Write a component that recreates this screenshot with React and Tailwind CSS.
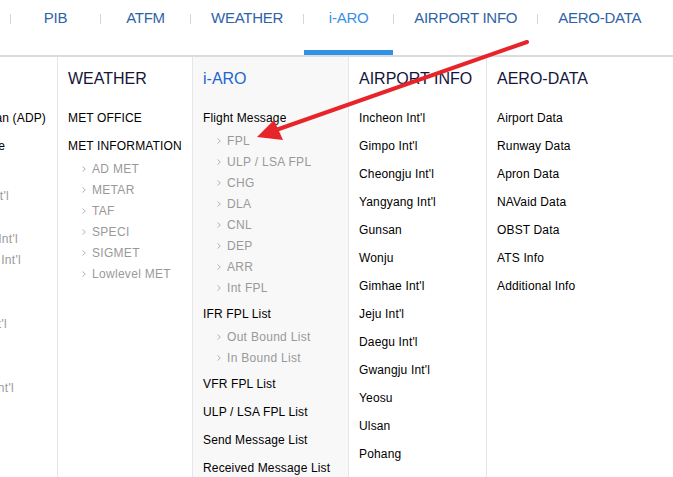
import React from "react";

const Chev = () => (
  <svg width="4" height="6" viewBox="0 0 4 6" className="shrink-0">
    <path d="M0.5 0.5 L3.3 3 L0.5 5.5" fill="none" stroke="#b4b4b4" strokeWidth="1" />
  </svg>
);

const Top = ({ children }) => (
  <div className="h-[28px] flex items-center text-[12px] tracking-[0.15px] text-black whitespace-nowrap">{children}</div>
);

const Subs = ({ items }) => (
  <div className="-mt-[1.5px] mb-[1.5px]">
    {items.map((t) => (
      <div key={t} className="h-[21px] flex items-center pl-[14px] gap-[6px] text-[12px] tracking-[0.3px] text-[#999] whitespace-nowrap">
        <Chev />
        <span>{t}</span>
      </div>
    ))}
  </div>
);

const Heading = ({ children, blue }) => (
  <div className={`h-[24px] mb-[13px] flex items-center text-[16px] whitespace-nowrap ${blue ? "text-[#2266cc]" : "text-[#14143a]"}`}>
    {children}
  </div>
);

const nav = ["PIB", "ATFM", "WEATHER", "i-ARO", "AIRPORT INFO", "AERO-DATA"];

const leftGray = ["", "Gimpo Int'l", "", "Cheongju Int'l", "Yangyang Int'l", "", "", "Jeju Int'l", "", "", "Gwangju Int'l"];
const leftPr = [0, "pr-[48px]", 0, "pr-[39px]", "pr-[36px]", 0, 0, "pr-[50px]", 0, 0, "pr-[43px]"];

export default function App() {
  return (
    <div className="relative w-[673px] h-[477px] overflow-hidden bg-white font-['Liberation_Sans',Arial,sans-serif]">
      {/* top nav */}
      <div className="flex h-[57px] pl-[10px] border-b-2 border-[#dcdcdc]">
        {nav.map((n) => {
          const active = n === "i-ARO";
          return (
            <div key={n} className="flex h-full">
              <div className="w-px h-[10px] mt-[14px] bg-[#d6d6d6]" />
              <div className="flex flex-col h-full min-w-[89px] px-[20px]">
                <div
                  className={`h-[36px] flex items-center justify-center text-[15px] tracking-[-0.25px] whitespace-nowrap ${
                    active ? "text-[#3a8fe6]" : "text-[#2e63a7]"
                  }`}
                >
                  {n}
                </div>
                {active && <div className="mt-auto -mx-[20px] h-[5px] bg-[#3191e7]" />}
              </div>
            </div>
          );
        })}
      </div>

      {/* columns */}
      <div className="flex h-[420px]">
        {/* clipped left column */}
        <div className="w-[58px] shrink-0 border-r border-[#e6e6e6] overflow-hidden pt-[10px]">
          <div className="h-[24px] mb-[13px]" />
          <div className="h-[28px] flex items-center justify-end pr-[11px] text-[12px] tracking-[0.15px] text-black whitespace-nowrap">
            <span className="shrink-0">ATFM Daily Plan (ADP)</span>
          </div>
          <div className="h-[28px] flex items-center justify-end pr-[52px] text-[12px] tracking-[0.15px] text-black whitespace-nowrap">
            <span className="shrink-0">Flow Message Exchange</span>
          </div>
          <div className="mt-[4.3px]">
            {leftGray.map((t, i) => (
              <div
                key={i}
                className={`h-[21.3px] flex items-center justify-end text-[12px] tracking-[0.3px] text-[#999] whitespace-nowrap ${leftPr[i] || ""}`}
              >
                {t && <span className="shrink-0">{t}</span>}
              </div>
            ))}
          </div>
        </div>

        {/* WEATHER */}
        <div className="w-[135px] shrink-0 border-r border-[#e6e6e6] pt-[10px] pl-[10px]">
          <Heading>WEATHER</Heading>
          <Top>MET OFFICE</Top>
          <Top>MET INFORMATION</Top>
          <Subs items={["AD MET", "METAR", "TAF", "SPECI", "SIGMET", "Lowlevel MET"]} />
        </div>

        {/* i-ARO */}
        <div className="w-[156px] shrink-0 border-r border-[#e6e6e6] bg-[#f8f8f8] pt-[10px] pl-[10px]">
          <Heading blue>i-ARO</Heading>
          <Top>Flight Message</Top>
          <Subs items={["FPL", "ULP / LSA FPL", "CHG", "DLA", "CNL", "DEP", "ARR", "Int FPL"]} />
          <Top>IFR FPL List</Top>
          <Subs items={["Out Bound List", "In Bound List"]} />
          <Top>VFR FPL List</Top>
          <Top>ULP / LSA FPL List</Top>
          <Top>Send Message List</Top>
          <Top>Received Message List</Top>
        </div>

        {/* AIRPORT INFO */}
        <div className="w-[138px] shrink-0 border-r border-[#e6e6e6] pt-[10px] pl-[10px]">
          <Heading>AIRPORT INFO</Heading>
          {[
            "Incheon Int'l",
            "Gimpo Int'l",
            "Cheongju Int'l",
            "Yangyang Int'l",
            "Gunsan",
            "Wonju",
            "Gimhae Int'l",
            "Jeju Int'l",
            "Daegu Int'l",
            "Gwangju Int'l",
            "Yeosu",
            "Ulsan",
            "Pohang",
          ].map((t) => (
            <Top key={t}>{t}</Top>
          ))}
        </div>

        {/* AERO-DATA */}
        <div className="flex-1 pt-[10px] pl-[10px]">
          <Heading>AERO-DATA</Heading>
          {["Airport Data", "Runway Data", "Apron Data", "NAVaid Data", "OBST Data", "ATS Info", "Additional Info"].map((t) => (
            <Top key={t}>{t}</Top>
          ))}
        </div>
      </div>

      {/* red annotation arrow */}
      <svg className="absolute top-0 left-0 pointer-events-none" width="673" height="477" viewBox="0 0 673 477">
        <line x1="527" y1="42" x2="276" y2="130" stroke="#e8242b" strokeWidth="4" strokeLinecap="round" />
        <polygon points="257,137 274,120 283,140" fill="#e8242b" />
      </svg>
    </div>
  );
}
